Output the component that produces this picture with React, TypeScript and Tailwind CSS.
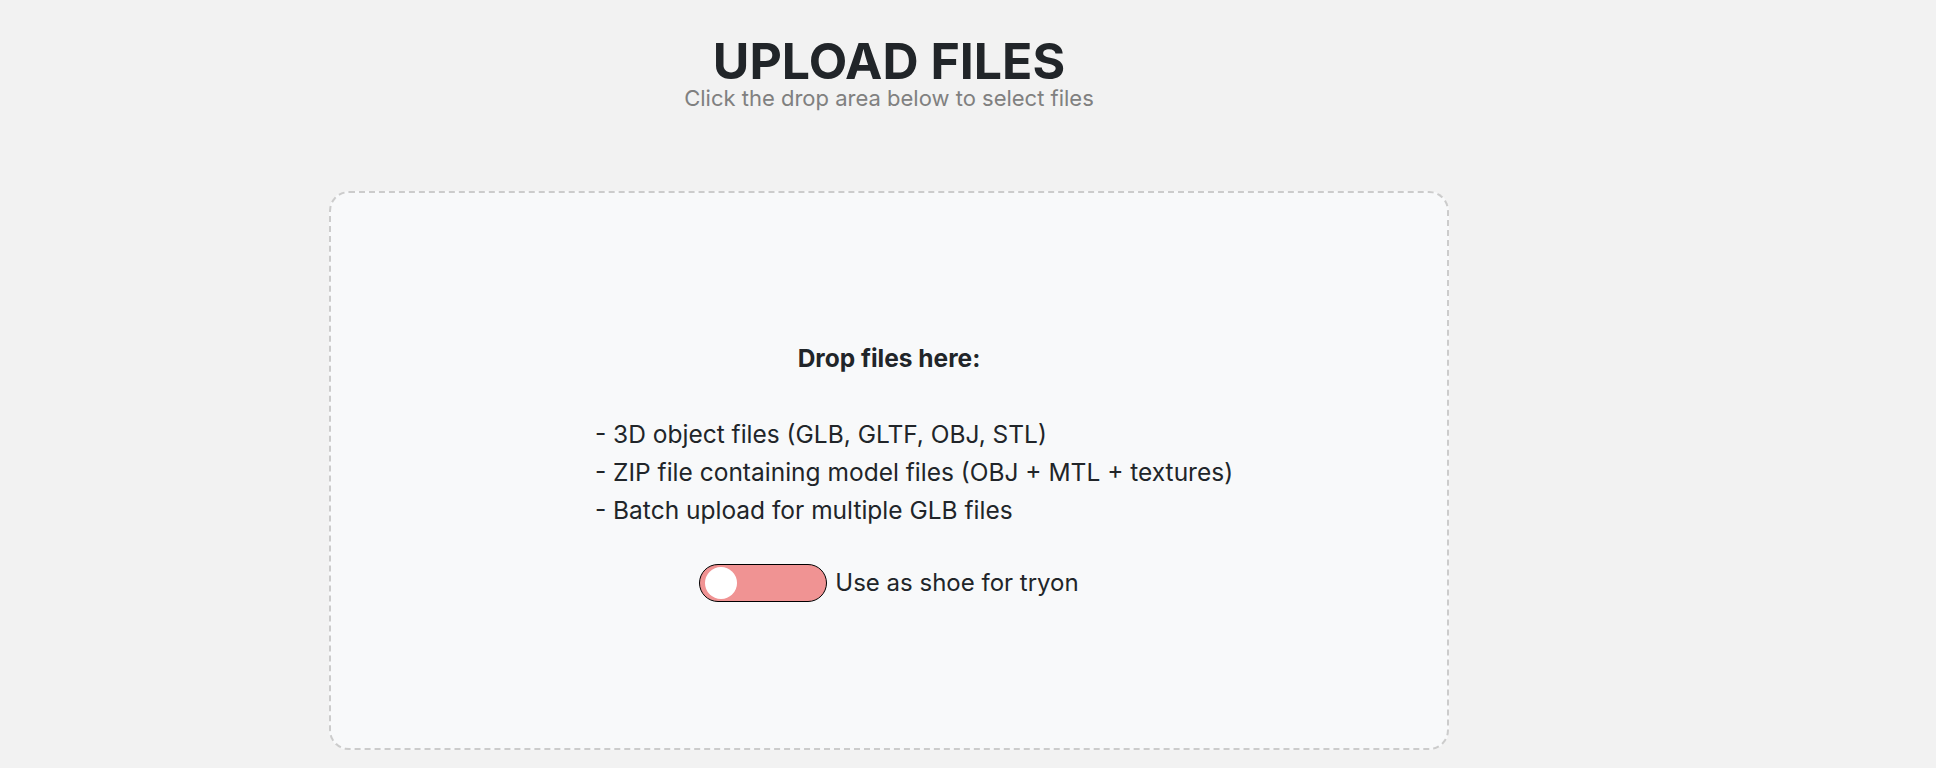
import { useState } from "react";

const FORMATS = [
  "- 3D object files (GLB, GLTF, OBJ, STL)",
  "- ZIP file containing model files (OBJ + MTL + textures)",
  "- Batch upload for multiple GLB files",
];

function ShoeToggle() {
  const [on, setOn] = useState(false);
  return (
    <label className="flex items-center gap-[8px] cursor-pointer">
      <button
        type="button"
        onClick={() => setOn(!on)}
        className={`w-[128px] h-[38px] rounded-full border border-black flex items-center px-[5px] ${
          on ? "bg-[#7ccf8a] justify-end" : "bg-[#f09393] justify-start"
        }`}
      >
        <span className="w-[32px] h-[32px] rounded-full bg-white block" />
      </button>
      <span className="text-[24px] leading-none text-[#212529]">Use as shoe for tryon</span>
    </label>
  );
}

export default function App() {
  return (
    <div className="min-h-screen bg-[#f2f2f2] font-['Inter','Liberation_Sans',sans-serif] text-[#212529]">
      <div className="ml-[329px] w-[1120px]">
        <div className="pt-[36px] text-center">
          <h1 className="text-[50px] leading-none font-bold text-[#212529]">UPLOAD FILES</h1>
          <p className="mt-[1px] text-[22px] leading-none text-[#808080]">Click the drop area below to select files</p>
        </div>

        <div className="mt-[82px] h-[559px] rounded-[20px] border-2 border-dashed border-[#cccccc] bg-[#f8f9fa] flex flex-col items-center justify-center cursor-pointer">
          <p className="text-[24.5px] leading-[38px] font-bold">Drop files here:</p>
          <div className="h-[38px]" />
          <div className="w-full flex justify-center pl-[50px]">
            <div className="text-[24.5px] leading-[38px]">
              {FORMATS.map((f) => (
                <p key={f}>{f}</p>
              ))}
            </div>
          </div>
          <div className="mt-[35px]">
            <ShoeToggle />
          </div>
        </div>
      </div>
    </div>
  );
}
